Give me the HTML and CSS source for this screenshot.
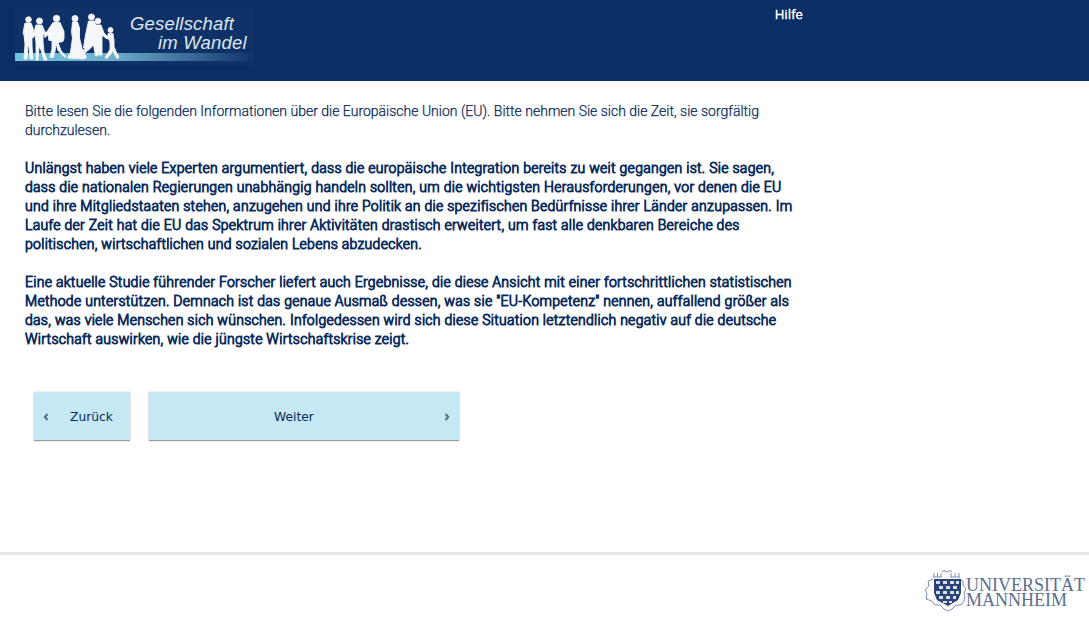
FILE: index.html
```html
<!DOCTYPE html>
<html lang="de">
<head>
  <meta charset="UTF-8">
  <title>Gesellschaft im Wandel</title>
  <link rel="stylesheet" href="styles.css">
</head>
<body>
  <!-- Header -->
  <header class="top">
    <div class="logo">
      <svg class="people" viewBox="0 0 240 57" width="240" height="57">
        <defs>
          <linearGradient id="band" x1="0" x2="1" y1="0" y2="0">
            <stop offset="0" stop-color="#6fc3de"/>
            <stop offset="0.4" stop-color="#6fb0cc"/>
            <stop offset="1" stop-color="#0e3268"/>
          </linearGradient>
        </defs>
        <rect x="0" y="45" width="240" height="8" fill="url(#band)"/>
        <g class="figures" fill="#f4f6f8" stroke="#f4f6f8" stroke-width="0.9" stroke-linejoin="round">
          <circle cx="13.5" cy="11.5" r="2.8"/>
          <path d="M10 15h6l2 5 1 9-2 1 0 8 1 13h-3l-1-13-1 0-1 13h-3l1-15-1-9-1-2z"/>
          <circle cx="24.5" cy="13" r="3"/>
          <path d="M21 17h6l3 7 3 1-1 2-4-1 0 8 1 10 3 8h-3l-3-10-2-3-1 13-2 0 0-17-1-8-3 2-1-2 3-3z"/>
          <circle cx="41.5" cy="10.5" r="3.2"/>
          <path d="M38 14.500h7l4 9 0 7-1 3-5 1 3 8 5 6-1 1-7-7-2-7-1 8-2 6h-3l2-9 0-8-3 0-1-6-3 3-1-1 5-8z"/>
          <circle cx="60" cy="10.500" r="3"/>
          <path d="M57.500 14h5l2 6 0 10 3 12 4 7-2 2-17-1 3-6 2-14-1-6z"/>
          <circle cx="76.500" cy="9" r="3"/>
          <path d="M73.500 13h6l3 10 1 7 1 11-2 7h-2l-2-11-6 6-7 5-1-2 6-6-2 0 2-13z"/>
          <circle cx="83" cy="13" r="2.800"/>
          <path d="M80 17h6l3 8 4 4-1 2-5-4 0 10 0 10-3 0-1-8-3-10z"/>
          <circle cx="95.500" cy="22" r="2.500"/>
          <path d="M93 25.500h5l1 7 0 6 2 5 3 6-2 1-4-7-6 7-2-1 5-8 0-7-1-3-4-3 1-1 2 1z"/>
        </g>
      </svg>
      <div class="logo-text">
        <span class="logo-line">Gesellschaft</span>
        <span class="logo-line logo-line-2">im Wandel</span>
      </div>
    </div>
    <a class="help" href="#">Hilfe</a>
  </header>

  <!-- Inhalt -->
  <main class="content">
    <p class="intro">Bitte lesen Sie die folgenden Informationen über die Europäische Union (EU). Bitte nehmen Sie sich die Zeit, sie sorgfältig durchzulesen.</p>
    <p class="strong">Unlängst haben viele Experten argumentiert, dass die europäische Integration bereits zu weit gegangen ist. Sie sagen, dass die nationalen Regierungen unabhängig handeln sollten, um die wichtigsten Herausforderungen, vor denen die EU und ihre Mitgliedstaaten stehen, anzugehen und ihre Politik an die spezifischen Bedürfnisse ihrer Länder anzupassen. Im Laufe der Zeit hat die EU das Spektrum ihrer Aktivitäten drastisch erweitert, um fast alle denkbaren Bereiche des politischen, wirtschaftlichen und sozialen Lebens abzudecken.</p>
    <p class="strong">Eine aktuelle Studie führender Forscher liefert auch Ergebnisse, die diese Ansicht mit einer fortschrittlichen statistischen Methode unterstützen. Demnach ist das genaue Ausmaß dessen, was sie "EU-Kompetenz" nennen, auffallend größer als das, was viele Menschen sich wünschen. Infolgedessen wird sich diese Situation letztendlich negativ auf die deutsche Wirtschaft auswirken, wie die jüngste Wirtschaftskrise zeigt.</p>

    <div class="buttons">
      <button class="btn btn-back" type="button">
        <svg class="chev" viewBox="0 0 6 8" width="6" height="8"><path d="M4.500 1 1.800 4l2.700 3" fill="none" stroke="#5c6f7c" stroke-width="2"/></svg>
        <span>Zurück</span>
      </button>
      <button class="btn btn-next" type="button">
        <span>Weiter</span>
        <svg class="chev" viewBox="0 0 6 8" width="6" height="8"><path d="M1.500 1 4.200 4 1.500 7" fill="none" stroke="#5c6f7c" stroke-width="2"/></svg>
      </button>
    </div>
  </main>

  <!-- Footer -->
  <footer class="bottom">
    <div class="uni">
      <svg class="crest" viewBox="0 0 42 44" width="42" height="44">
        <g fill="none" stroke="#7f8ea8" stroke-width="1">
          <path d="M9 8h9M10 4v4M13.500 4v4M17 4v4M26 8h10M27 4v4M31 4v4M35 4v4M18 3l2-1.500 3 1.500 3-1.500 2 1.500"/>
          <path d="M9 10 4 12l1 5-4 4 2 4-1 5 6 2 3 4 5 0 4 4 4 2 4-2 4-4 5 0 3-4 1-5-1-3 2-4-3-4 0-4-4-2"/>
        </g>
        <path d="M10 10h27v14l-3 7-10 6-11-6-3-7z" fill="#2a4478"/>
        <g fill="#d8dee8">
          <rect x="12" y="12" width="4" height="3"/><rect x="19" y="12" width="4" height="3"/><rect x="26" y="12" width="4" height="3"/><rect x="32" y="12" width="3" height="3"/>
          <rect x="15" y="17" width="4" height="3"/><rect x="22" y="17" width="4" height="3"/><rect x="29" y="17" width="4" height="3"/>
          <rect x="12" y="22" width="4" height="3"/><rect x="19" y="22" width="4" height="3"/><rect x="26" y="22" width="4" height="3"/><rect x="32" y="22" width="3" height="3"/>
          <rect x="15" y="27" width="4" height="3"/><rect x="22" y="27" width="4" height="3"/><rect x="29" y="27" width="3" height="3"/>
          <rect x="19" y="32" width="4" height="2"/><rect x="25" y="32" width="3" height="2"/>
        </g>
      </svg>
      <div class="uni-text">
        <span>UNIVERSITÄT</span>
        <span>MANNHEIM</span>
      </div>
    </div>
  </footer>
</body>
</html>
```

FILE: styles.css
```css
* {
  margin: 0;
  padding: 0;
  box-sizing: border-box;
}

body {
  font-family: Roboto, Arial, sans-serif;
  background-color: #fff;
  color: #0a2c5e;
  height: 618px;
  overflow: hidden;
}

.top {
  height: 81px;
  background-color: #0a2f66;
  padding: 8px 0 0 15px;
  display: flex;
  align-items: flex-start;
}

.logo {
  width: 240px;
  height: 57px;
  display: flex;
  position: relative;
  background-color: #0e3268;
}

.people {
  display: block;
}

.figures {
  filter: blur(0.35px);
}

.logo-text {
  position: absolute;
  top: 6px;
  left: 115px;
  display: flex;
  flex-direction: column;
  font-family: "Liberation Sans", Arial, sans-serif;
  font-style: italic;
  font-size: 18.5px;
  line-height: 19px;
  letter-spacing: 0.2px;
  color: #dfe5ec;
}

.logo-line-2 {
  margin-left: 28px;
}

.help {
  margin: 0 0 0 520px;
  color: #fff;
  font-size: 13px;
  font-weight: 300;
  letter-spacing: 0.4px;
  -webkit-text-stroke: 0.6px #fff;
  line-height: 14px;
  text-decoration: none;
}

.content {
  height: 471px;
  padding: 21px 0 0 25px;
  width: 803px;
  font-size: 14px;
  line-height: 19px;
}

.intro {
  font-weight: 300;
  -webkit-text-stroke: 0.25px #0a2c5e;
  margin-bottom: 19px;
}

/* Roboto Light mit kuenstlichem Fett, wie im Original */
.strong {
  font-weight: 300;
  -webkit-text-stroke: 0.9px #0a2c5e;
  letter-spacing: 0.29px;
  margin-bottom: 19px;
}

.buttons {
  display: flex;
  gap: 19px;
  margin: 43px 0 0 9px;
}

.btn {
  height: 48px;
  padding-top: 1px;
  background-color: #c5e8f5;
  border: none;
  box-shadow: 0 1px 1px rgba(0, 0, 0, 0.35), 0 0 2px rgba(0, 0, 0, 0.18);
  font-family: "DejaVu Sans", Verdana, sans-serif;
  font-size: 12.3px;
  color: #0a2c5e;
  display: flex;
  align-items: center;
  cursor: pointer;
}

.btn-back {
  width: 96px;
  padding-left: 9px;
  padding-right: 17px;
  justify-content: space-between;
}

.btn-next {
  width: 310px;
  padding-left: 125px;
  padding-right: 9px;
  justify-content: space-between;
}

.bottom {
  height: 66px;
  border-top: 3px solid #e6e6e6;
  display: flex;
  justify-content: flex-end;
  padding: 14px 4px 0 0;
}

.uni {
  display: flex;
  align-items: center;
  height: 44px;
}

.uni-text {
  display: flex;
  flex-direction: column;
  padding-top: 3px;
  font-family: "Liberation Serif", "Times New Roman", serif;
  font-size: 18px;
  line-height: 15px;
  color: #5a6d8f;
}
```
